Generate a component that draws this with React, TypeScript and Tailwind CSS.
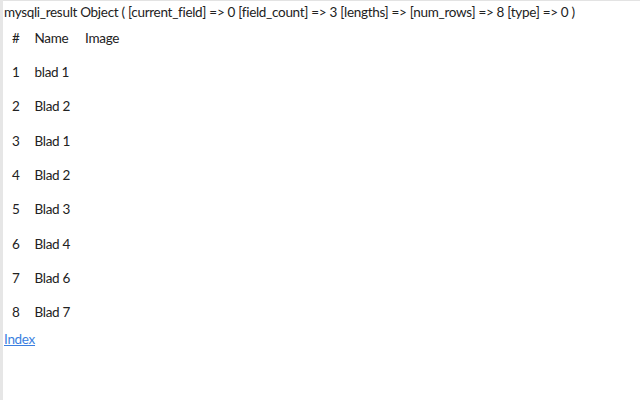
const rows = [
  { id: 1, name: 'blad 1', h: 'h-[34px]' },
  { id: 2, name: 'Blad 2', h: 'h-[35px]' },
  { id: 3, name: 'Blad 1', h: 'h-[34px]' },
  { id: 4, name: 'Blad 2', h: 'h-[34px]' },
  { id: 5, name: 'Blad 3', h: 'h-[35px]' },
  { id: 6, name: 'Blad 4', h: 'h-[34px]' },
  { id: 7, name: 'Blad 6', h: 'h-[34px]' },
  { id: 8, name: 'Blad 7', h: 'h-[35px]' },
]

export default function App() {
  return (
    <div className="w-[640px] h-[400px] bg-white flex overflow-hidden">
      {/* window edge */}
      <div className="w-[3px] shrink-0 bg-[#e6e6e6]" />
      <div className="flex-1 min-w-0 flex flex-col border-t border-[#e3e3e3] pt-[2px] pl-[1px] text-[13.5px] tracking-[-0.3px] leading-[19px] text-[#222] font-['Lato',sans-serif]">
        <div className="whitespace-nowrap">
          mysqli_result Object ( [current_field] =&gt; 0 [field_count] =&gt; 3 [lengths] =&gt; [num_rows] =&gt; 8 [type] =&gt; 0 )
        </div>
        <table className="border-collapse self-start">
          <thead>
            <tr className="h-[33px]">
              <th className="pl-2 pr-[7px] font-normal text-left">#</th>
              <th className="pl-2 pr-[7px] font-normal text-left">Name</th>
              <th className="px-2 font-normal text-left">Image</th>
            </tr>
          </thead>
          <tbody>
            {rows.map((r) => (
              <tr key={r.id} className={r.h}>
                <td className="pl-2 pr-[7px]">{r.id}</td>
                <td className="pl-2 pr-[7px]">{r.name}</td>
                <td className="px-2"></td>
              </tr>
            ))}
          </tbody>
        </table>
        <div>
          <a href="#" className="text-[#3b7fe0] underline">Index</a>
        </div>
      </div>
    </div>
  )
}
